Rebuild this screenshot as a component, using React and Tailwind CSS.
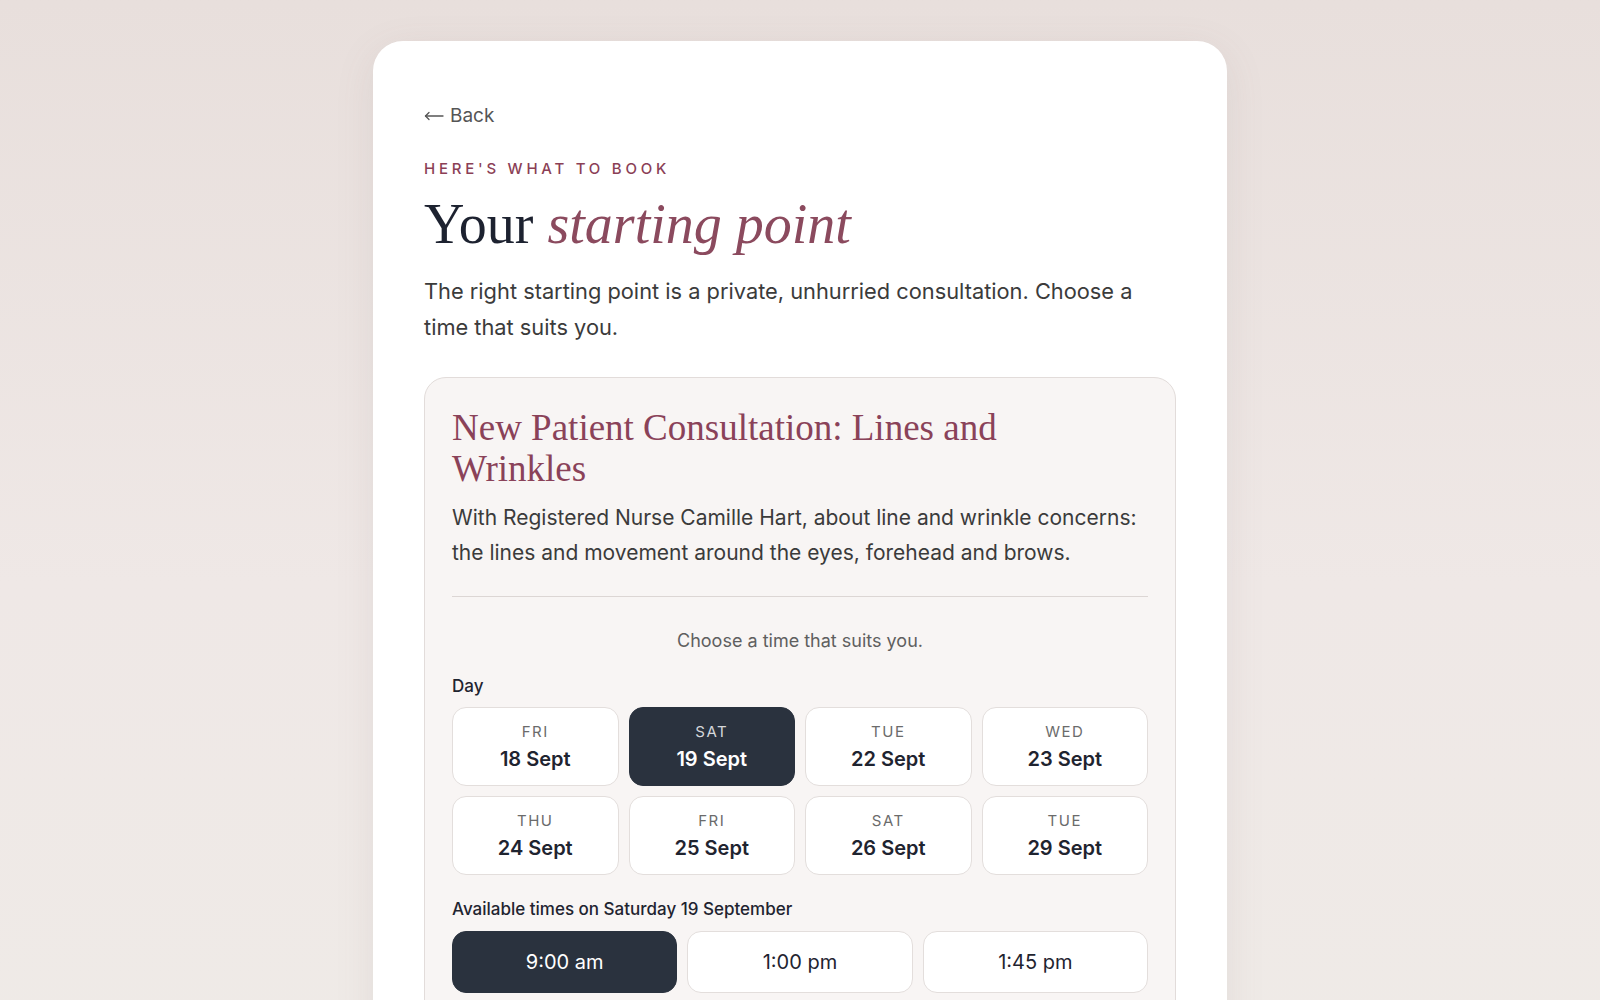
import React, { useState } from 'react';

const days = [
  { dow: 'FRI', date: '18 Sept' },
  { dow: 'SAT', date: '19 Sept' },
  { dow: 'TUE', date: '22 Sept' },
  { dow: 'WED', date: '23 Sept' },
  { dow: 'THU', date: '24 Sept' },
  { dow: 'FRI', date: '25 Sept' },
  { dow: 'SAT', date: '26 Sept' },
  { dow: 'TUE', date: '29 Sept' },
];

const times = ['9:00 am', '1:00 pm', '1:45 pm'];

const sans = "font-['Inter','Noto_Sans',sans-serif]";
const serif = "font-['Liberation_Serif','DejaVu_Serif',serif]";

const LongArrow = () => (
  <svg width="20" height="10" viewBox="0 0 20 10" fill="none" stroke="currentColor" strokeWidth="1.3" strokeLinecap="round" strokeLinejoin="round">
    <path d="M19 5H1.5" />
    <path d="M5 1.5L1.5 5L5 8.5" />
  </svg>
);

export default function App() {
  const [day, setDay] = useState(1);
  const [time, setTime] = useState(0);

  return (
    <div className={`min-h-screen bg-gradient-to-b from-[#e8dfdc] via-[#efe8e6] to-[#efebe7] pt-[41px] pb-16 ${sans}`}>
      <div className="mx-auto w-[854px] rounded-[30px] bg-white px-[51px] pt-[61px] pb-16 shadow-[0_10px_40px_rgba(120,100,95,0.10)]">
        <button className="flex items-center gap-[6px] text-[19px] leading-7 text-[#555]">
          <LongArrow />
          <span>Back</span>
        </button>

        <p className="mt-[28px] text-[15px] font-medium tracking-[0.25em] text-[#8b3f56]">
          HERE'S WHAT TO BOOK
        </p>

        <h1 className={`mt-[11px] text-[56px] leading-[64px] text-[#1d2230] ${serif}`}>
          Your <em className="text-[#8b4a5e]">starting point</em>
        </h1>

        <p className="mt-[17px] max-w-[725px] text-[21.8px] leading-[36px] text-[#3b3b3b]">
          The right starting point is a private, unhurried consultation. Choose a time that suits you.
        </p>

        <div className="mt-[32px] rounded-[22px] border border-[#e2dcda] bg-[#f8f5f4] px-[27px] pt-[29px] pb-10">
          <h2 className={`max-w-[600px] text-[37px] leading-[41px] text-[#8a4259] ${serif}`}>
            New Patient Consultation: Lines and Wrinkles
          </h2>
          <p className="mt-[11px] text-[21px] leading-[35px] text-[#3b3b3b]">
            With Registered Nurse Camille Hart, about line and wrinkle concerns: the lines and movement around the eyes, forehead and brows.
          </p>

          <div className="mt-[26px] h-px bg-[#dcd6d4]" />

          <p className="mt-[32px] text-center text-[18px] leading-6 text-[#5f5f5f]">
            Choose a time that suits you.
          </p>

          <p className="mt-[21px] text-[17px] font-medium leading-6 text-[#1f2430]">Day</p>

          <div className="mt-[9px] grid grid-cols-4 gap-[10px]">
            {days.map((d, i) => {
              const on = i === day;
              return (
                <button
                  key={i}
                  onClick={() => setDay(i)}
                  className={`flex h-[79px] flex-col items-center justify-center rounded-[14px] border ${
                    on ? 'border-[#2a323e] bg-[#2a323e]' : 'border-[#e3dedc] bg-white'
                  }`}
                >
                  <span className={`text-[15px] leading-5 tracking-[0.1em] ${on ? 'text-[#d5d7db]' : 'text-[#6b6b6b]'}`}>
                    {d.dow}
                  </span>
                  <span className={`mt-[5px] text-[20px] font-semibold leading-6 ${on ? 'text-white' : 'text-[#1f2430]'}`}>
                    {d.date}
                  </span>
                </button>
              );
            })}
          </div>

          <p className="mt-[22px] text-[17px] font-medium leading-6 text-[#1f2430]">
            Available times on Saturday 19 September
          </p>

          <div className="mt-[10px] grid grid-cols-3 gap-[10px]">
            {times.map((t, i) => {
              const on = i === time;
              return (
                <button
                  key={t}
                  onClick={() => setTime(i)}
                  className={`h-[62px] rounded-[14px] border text-[20px] ${
                    on ? 'border-[#2a323e] bg-[#2a323e] text-white' : 'border-[#e3dedc] bg-white text-[#1f2430]'
                  }`}
                >
                  {t}
                </button>
              );
            })}
          </div>
        </div>
      </div>
    </div>
  );
}
